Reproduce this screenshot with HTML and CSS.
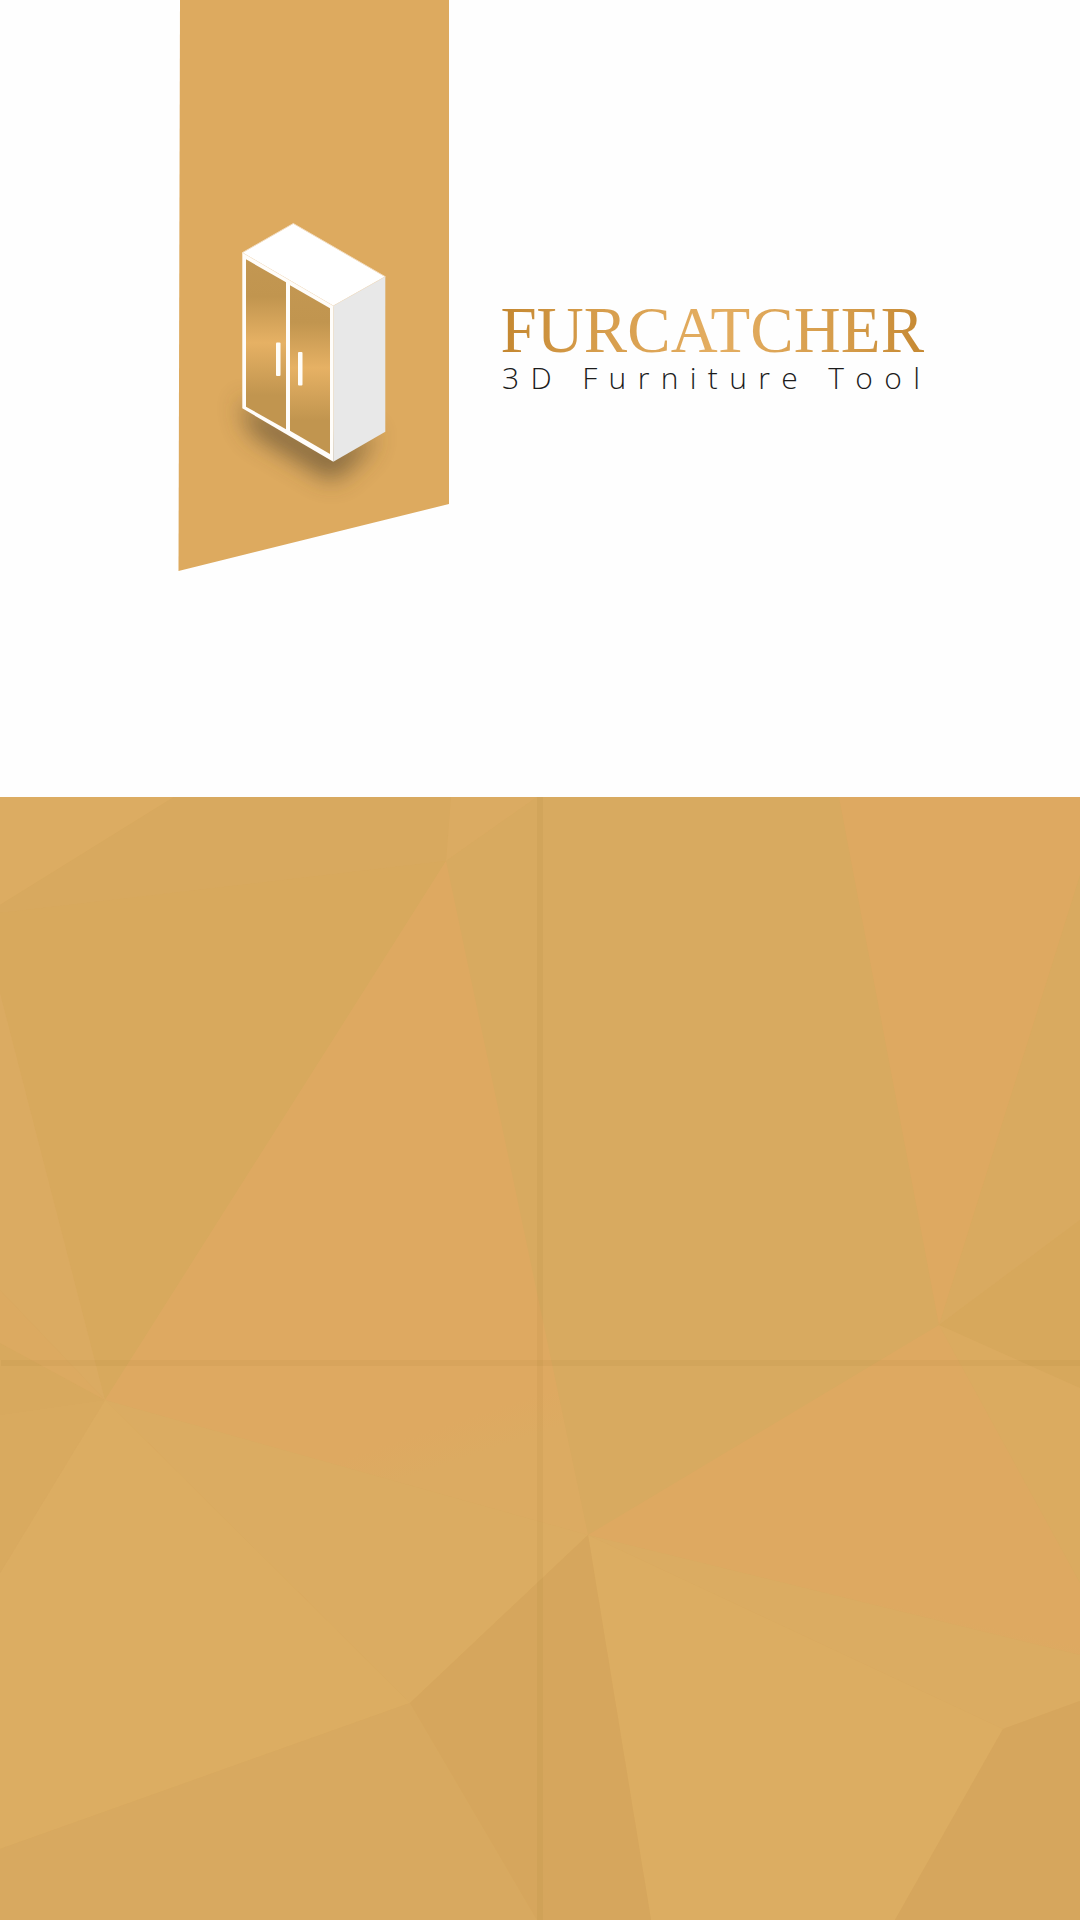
FILE: index.html
```html
<!DOCTYPE html>
<html lang="en">
<head>
<meta charset="utf-8">
<title>Furcatcher</title>
<link rel="stylesheet" href="styles.css">
</head>
<body>
<main class="page">
  <section class="hero">
    <svg class="banner" viewBox="178 0 271 571" width="271" height="571" aria-label="Wardrobe icon">
      <defs>
        <linearGradient id="door" x1="0" y1="0" x2="0" y2="1">
          <stop offset="0" stop-color="#c39752"/>
          <stop offset=".22" stop-color="#c1954f"/>
          <stop offset=".49" stop-color="#e6b164"/>
          <stop offset=".8" stop-color="#c1954f"/>
          <stop offset="1" stop-color="#c1954f"/>
        </linearGradient>
        <filter id="soft" x="-40%" y="-80%" width="180%" height="260%">
          <feGaussianBlur stdDeviation="13"/>
        </filter>
      </defs>
      <polygon class="banner-fill" points="180,0 449,0 449,504 178.500,571"/>
      <polygon class="cab-shadow" filter="url(#soft)" points="240,400 333,450 375,430 365,452 333,480 252,432"/>
      <polygon class="cab-top" points="293.300,223.500 385.300,276.700 333.300,306 242.300,252.700"/>
      <polygon class="cab-side" points="333.300,306 385.300,276.700 385.300,431.700 333.300,461.700"/>
      <polygon class="cab-front" points="242.300,252.700 333.300,306 333.300,461.700 242.300,408.300"/>
      <polygon fill="url(#door)" points="246,259.300 286,282.300 286,429.300 246,406.700"/>
      <polygon fill="url(#door)" points="290,285.300 330,308.300 330,454 290,430.700"/>
      <rect class="cab-handle" x="276" y="342.500" width="4.500" height="33.500" rx="1"/>
      <rect class="cab-handle" x="298" y="352" width="4.500" height="33.500" rx="1"/>
    </svg>
    <div class="brand">
      <h1 class="brand-name">FURCATCHER</h1>
      <p class="brand-tag">3D Furniture Tool</p>
    </div>
  </section>
  <section class="pattern">
    <svg class="pattern-art" viewBox="0 797 1080 1123" width="1080" height="1123" preserveAspectRatio="none" aria-hidden="true">
      <defs>
        <linearGradient id="orangeFade" gradientUnits="userSpaceOnUse" x1="300" y1="1380" x2="340" y2="1500">
          <stop offset="0" stop-color="#dea961"/>
          <stop offset=".7" stop-color="#dea961"/>
          <stop offset="1" stop-color="#dcab62"/>
        </linearGradient>
        <linearGradient id="orangeRight" gradientUnits="userSpaceOnUse" x1="820" y1="1480" x2="790" y2="1620">
          <stop offset="0" stop-color="#dea961"/>
          <stop offset=".75" stop-color="#dea961"/>
          <stop offset="1" stop-color="#dbab62"/>
        </linearGradient>
      </defs>
      <rect class="p-base" x="0" y="797" width="1080" height="1123"/>
      <polygon fill="#dcac62" points="0,797 174,797 0,905"/>
      <polygon fill="#d8a95f" points="0,905 174,797 451,797 446,861 0,913"/>
      <polygon fill="#dbab62" points="451,797 537,797 446,861"/>
      <polygon fill="#d8a95d" points="0,913 446,861 105,1400 0,993"/>
      <polygon fill="#d8aa60" points="537,797 839,797 939,1325 588,1535 446,861"/>
      <polygon fill="#d9aa60" points="1080,875 939,1325 1080,1220"/>
      <polygon fill="#d7a85c" points="939,1325 1080,1220 1080,1388"/>
      <polygon fill="#dea961" points="839,797 1080,797 1080,875 939,1325"/>
      <polygon fill="url(#orangeFade)" points="446,861 105,1400 588,1535"/>
      <polygon fill="url(#orangeRight)" points="588,1535 939,1325 1080,1583 1080,1655"/>
      <polygon fill="#dbab60" points="939,1325 1080,1388 1080,1583"/>
      <polygon fill="#dbac62" points="588,1535 1080,1655 1080,1701 1003,1729"/>
      <polygon fill="#dcad62" points="588,1535 1003,1729 895,1920 651,1920"/>
      <polygon fill="#d6a65d" points="1003,1729 1080,1701 1080,1920 895,1920"/>
      <polygon fill="#dbac62" points="105,1400 588,1535 410,1703"/>
      <polygon fill="#dcad62" points="105,1400 410,1703 0,1849 0,1573"/>
      <polygon fill="#d8a960" points="0,1849 410,1703 537,1920 0,1920"/>
      <polygon fill="#d6a65d" points="410,1703 588,1535 651,1920 537,1920"/>
      <polygon fill="#d9aa5f" points="0,1415 105,1400 0,1573"/>
      <polygon fill="#d8a95e" points="0,1343 105,1400 0,1415"/>
      <polygon fill="#dcaa61" points="0,1290 105,1400 0,1343"/>
      <polygon fill="#dbab62" points="0,993 105,1400 0,1290"/>
      <rect class="p-line" x="537" y="797" width="6" height="1123"/>
      <rect class="p-line" x="1" y="1360" width="1079" height="6"/>
    </svg>
  </section>
</main>
</body>
</html>
```
FILE: styles.css
```css
html, body {
  margin: 0;
  padding: 0;
  background: #fefefe;
}

.page {
  width: 1080px;
  height: 1920px;
  display: flex;
  flex-direction: column;
  overflow: hidden;
}

.hero {
  height: 797px;
  display: flex;
  align-items: flex-start;
  gap: 53px;
  padding-left: 178px;
  box-sizing: border-box;
  background: #fefefe;
}

.banner {
  display: block;
  flex: none;
}

.banner-fill { fill: #ddaa5f; }
.cab-shadow { fill: #4e3f2a; opacity: .7; }
.cab-top { fill: #ffffff; stroke: #f1dcc0; stroke-width: 1; }
.cab-side { fill: #e8e8e8; }
.cab-front { fill: #fffdfa; }
.cab-handle { fill: #fffdf8; }

.brand {
  padding-top: 307px;
  display: flex;
  flex-direction: column;
}

.brand-name {
  margin: 0 0 0 -1.5px;
  font-family: "Liberation Serif", "Times New Roman", serif;
  font-size: 65px;
  font-weight: 400;
  line-height: 46px;
  letter-spacing: 0.1px;
  background: linear-gradient(90deg, #c48730 0%, #d49a48 18%, #e4ae62 50%, #d49a48 82%, #c48730 100%);
  -webkit-background-clip: text;
  background-clip: text;
  color: transparent;
  white-space: nowrap;
}

.brand-tag {
  margin: 12px 0 0;
  font-family: "Open Sans", "Liberation Sans", sans-serif;
  font-size: 30px;
  font-weight: 300;
  line-height: 26px;
  letter-spacing: 11.35px;
  color: #1c1c1c;
  white-space: nowrap;
}

.pattern {
  height: 1123px;
  flex: none;
}

.pattern-art {
  display: block;
}

.p-base { fill: #d8a95f; }
.p-line { fill: #96772f; opacity: .09; }
```
